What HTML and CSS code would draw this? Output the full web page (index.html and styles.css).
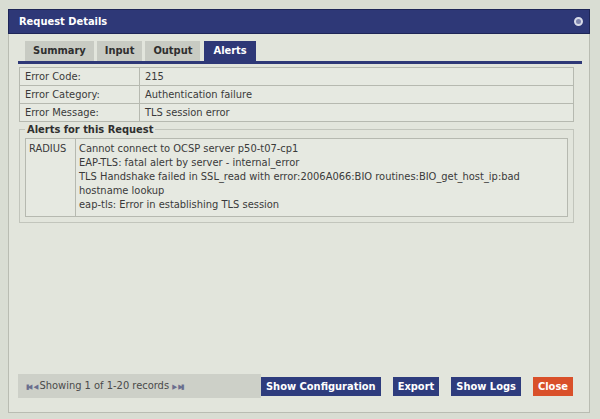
FILE: index.html
```html
<!DOCTYPE html>
<html lang="en">
<head>
    <meta charset="UTF-8">
    <title>Request Details</title>
    <link rel="stylesheet" href="styles.css">
</head>
<body>
    <div class="dialog">
        <div class="titlebar">
            <span>Request Details</span>
            <span class="close-x"></span>
        </div>
        <div class="dialog-body">
            <div class="tabs">
                <div class="tab">Summary</div>
                <div class="tab">Input</div>
                <div class="tab">Output</div>
                <div class="tab active">Alerts</div>
            </div>
            <div class="panel">
                <table class="details">
                    <tr><td class="label">Error Code:</td><td>215</td></tr>
                    <tr><td class="label">Error Category:</td><td>Authentication failure</td></tr>
                    <tr><td class="label">Error Message:</td><td>TLS session error</td></tr>
                </table>
                <fieldset class="alerts">
                    <legend>Alerts for this Request</legend>
                    <table class="alert-table">
                        <tr>
                            <td class="source">RADIUS</td>
                            <td>Cannot connect to OCSP server p50-t07-cp1<br>
                                EAP-TLS: fatal alert by server - internal_error<br>
                                TLS Handshake failed in SSL_read with error:2006A066:BIO routines:BIO_get_host_ip:bad hostname lookup<br>
                                eap-tls: Error in establishing TLS session</td>
                        </tr>
                    </table>
                </fieldset>
            </div>
            <div class="footer">
                <div class="pager">
                    <span class="arrow">&#9646;&#9664;</span>
                    <span class="arrow">&#9664;</span>
                    Showing 1 of 1-20 records
                    <span class="arrow">&#9654;</span>
                    <span class="arrow">&#9654;&#9646;</span>
                </div>
                <div class="buttons">
                    <button>Show Configuration</button>
                    <button>Export</button>
                    <button>Show Logs</button>
                    <button class="btn-close">Close</button>
                </div>
            </div>
        </div>
    </div>
</body>
</html>
```

FILE: styles.css
```css
body {
    margin: 0;
    background-color: #d9ddd3;
    font-family: "DejaVu Sans Condensed", "Liberation Sans", sans-serif;
    font-size: 11px;
    color: #3a3a3a;
}

.dialog {
    width: 582px;
    height: 404px;
    margin: 9px 0 0 8px;
    display: flex;
    flex-direction: column;
    background-color: #e2e5dc;
    border: 1px solid #b9bcb2;
    box-sizing: border-box;
}

.titlebar {
    height: 23px;
    background-color: #2e3877;
    border: 1px solid #1e2657;
    color: #fff;
    font-weight: bold;
    display: flex;
    align-items: center;
    justify-content: space-between;
    padding: 0 6px 0 10px;
    margin: -1px -1px 0 -1px;
}

.close-x {
    width: 5px;
    height: 5px;
    border-radius: 50%;
    border: 2px solid #d8dbe8;
    background-color: #7d84ad;
}

.dialog-body {
    flex: 1;
    display: flex;
    flex-direction: column;
    padding: 7px 7px 14px 9px;
}

.tabs {
    display: flex;
    gap: 3px;
    padding-left: 7px;
    border-bottom: 3px solid #2e3877;
}

.tab {
    height: 20px;
    line-height: 20px;
    padding: 0 8px;
    background-color: #c8cbc3;
    color: #2f2f2f;
    font-weight: bold;
}

.tab.active {
    background-color: #2e3877;
    color: #fff;
    margin-left: 1px;
    padding: 0 9px;
}

.panel {
    flex: 1;
    padding: 3px 8px 0 1px;
}

.details {
    width: 100%;
    border-collapse: collapse;
}

.details td {
    border: 1px solid #b6b9b0;
    height: 17px;
    padding: 0 5px;
    background-color: #e6e9e1;
}

.details td.label {
    width: 109px;
}

.alerts {
    margin: 1px 0 0 0;
    padding: 2px 5px 5px 5px;
    border: 1px solid #c2c5bc;
}

.alerts legend {
    font-weight: bold;
    color: #2f2f2f;
    padding: 0 2px;
}

.alert-table {
    width: 100%;
    border-collapse: collapse;
}

.alert-table td {
    border: 1px solid #b6b9b0;
    vertical-align: top;
    line-height: 14px;
    padding: 3px 3px 4px 3px;
    background-color: #e6e9e1;
}

.alert-table td.source {
    width: 43px;
}

.footer {
    display: flex;
    align-items: center;
    justify-content: space-between;
    padding-right: 9px;
}

.pager {
    width: 239px;
    height: 24px;
    line-height: 24px;
    padding-left: 8px;
    background-color: #cdd0c8;
    color: #4a4a4a;
}

.arrow {
    font-size: 7px;
    color: #6a6e8e;
    letter-spacing: -2px;
}

.buttons {
    display: flex;
    gap: 12px;
}

button {
    height: 19px;
    padding: 0 5px;
    background-color: #2e3c7d;
    color: #fff;
    border: none;
    white-space: nowrap;
    font-family: "DejaVu Sans Condensed", "Liberation Sans", sans-serif;
    font-size: 11px;
    font-weight: bold;
}

.btn-close {
    background-color: #d9502a;
}
```
